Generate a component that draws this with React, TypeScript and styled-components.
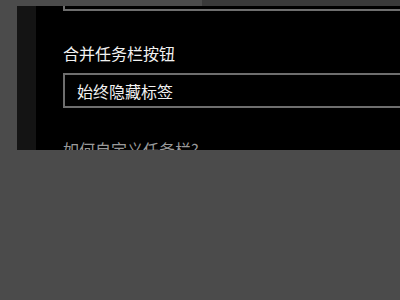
import React from 'react'
import styled, { createGlobalStyle } from 'styled-components'

const GlobalStyle = createGlobalStyle`
  html, body {
    margin: 0;
    padding: 0;
    background: #4b4b4b;
    overflow: hidden;
  }
  body {
    font-family: "Noto Sans CJK SC", "Noto Sans", sans-serif;
  }
`

const Page = styled.div`
  width: 400px;
  height: 300px;
  overflow: hidden;
`

const TopStrip = styled.div`
  display: flex;
  height: 6px;
`

const StripSpacer = styled.div`
  width: 202px;
`

const BackWindow = styled.div`
  flex: 1;
  background: #393939;
`

const Window = styled.div`
  display: flex;
  margin-left: 17px;
  width: 420px;
  height: 144px;
  overflow: hidden;
  background: #000;
`

const Sidebar = styled.div`
  width: 19px;
  flex-shrink: 0;
  background: #141414;
`

const Content = styled.div`
  flex: 1;
  display: flex;
  flex-direction: column;
  padding-left: 27px;

  & > * {
    flex-shrink: 0;
  }
`

const ClippedSelect = styled.div`
  height: 3px;
  border-left: 2px solid #6e6e6e;
  border-bottom: 2px solid #6e6e6e;
`

const Label = styled.div`
  margin-top: 32px;
  font-size: 16px;
  line-height: 20px;
  color: #f2f2f2;
  white-space: nowrap;
`

const Select = styled.div`
  margin-top: 10px;
  height: 35px;
  box-sizing: border-box;
  border: 2px solid #6e6e6e;
  display: flex;
  align-items: center;
  padding-left: 12px;
  font-size: 16px;
  line-height: 20px;
  color: #f2f2f2;
  white-space: nowrap;
`

const Link = styled.div`
  margin-top: 31px;
  font-size: 16px;
  line-height: 20px;
  color: #9a9a9a;
  white-space: nowrap;
`

export default function App() {
  return (
    <Page>
      <GlobalStyle />
      <TopStrip>
        <StripSpacer />
        <BackWindow />
      </TopStrip>
      <Window>
        <Sidebar />
        <Content>
          <ClippedSelect />
          <Label>合并任务栏按钮</Label>
          <Select>始终隐藏标签</Select>
          <Link>如何自定义任务栏?</Link>
        </Content>
      </Window>
    </Page>
  )
}
